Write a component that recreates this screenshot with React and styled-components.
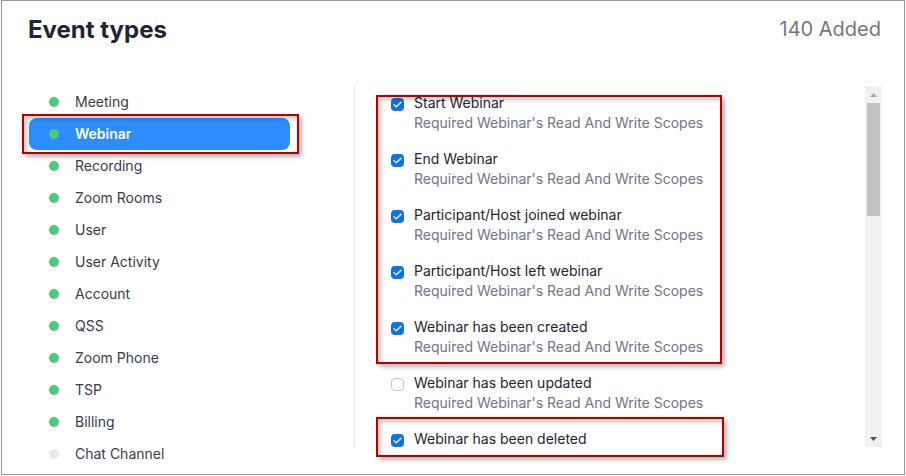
import React from 'react';
import styled, { createGlobalStyle } from 'styled-components';

const Global = createGlobalStyle`
    body {
        margin: 0;
        font-family: Inter, "Noto Sans", sans-serif;
        background: #fff;
    }
`

const Frame = styled.div`
    position: relative;
    box-sizing: border-box;
    width: 904px;
    height: 475px;
    margin-left: 1px;
    border: 1px solid #999;
    background: #fff;
    overflow: hidden;
`

const Header = styled.div`
    display: flex;
    justify-content: space-between;
    align-items: flex-start;
    height: 85px;
    box-sizing: border-box;
    padding: 13px 23px 0 26px;
`

const Title = styled.h1`
    margin: 0;
    font-size: 24px;
    line-height: 32px;
    font-weight: 700;
    color: #232333;
`

const Count = styled.div`
    margin-top: 3px;
    font-size: 20px;
    line-height: 24px;
    color: #747487;
`

const Body = styled.div`
    display: flex;
    align-items: flex-start;
`

const Nav = styled.div`
    width: 352px;
    box-sizing: border-box;
    padding: 0 64px 0 27px;
`

const NavItem = styled.div`
    display: flex;
    align-items: center;
    height: 32px;
    padding-left: 20px;
    border-radius: 8px;
    font-size: 14px;
    line-height: 30px;
    color: ${({active}) => active ? '#fff' : '#39394d'};
    font-weight: ${({active}) => active ? 600 : 400};
    background: ${({active}) => active ? '#2d8cff' : 'transparent'};
`

const Dot = styled.span`
    width: 10px;
    height: 10px;
    border-radius: 50%;
    margin-right: 16px;
    background: ${({off}) => off ? '#e9e9f0' : '#4ccc78'};
`

const Panel = styled.div`
    display: flex;
    flex: 1;
    height: 361px;
    border-left: 1px solid #e4e4ef;
`

const List = styled.div`
    flex: 1;
    overflow: hidden;
    padding: 7px 0 0 36px;
`

const Event = styled.div`
    display: flex;
    align-items: flex-start;
    margin-bottom: 16px;
`

const Box = styled.span`
    flex: none;
    box-sizing: border-box;
    width: 13px;
    height: 13px;
    margin: 5px 10px 0 0;
    border-radius: 4px;
    display: flex;
    align-items: center;
    justify-content: center;
    background: ${({checked}) => checked ? '#0e72ed' : '#fff'};
    border: ${({checked}) => checked ? 'none' : '1px solid #c6c6d8'};
`

const Texts = styled.div`
    font-size: 14px;
    line-height: 20px;
`

const Name = styled.div`
    color: #232333;
`

const Scope = styled.div`
    color: #747487;
`

const Scrollbar = styled.div`
    display: flex;
    flex-direction: column;
    align-items: center;
    width: 17px;
    margin-right: 22px;
    background: #f1f1f1;
`

const Arrow = styled.div`
    height: 17px;
    width: 100%;
    display: flex;
    align-items: center;
    justify-content: center;
`

const Thumb = styled.div`
    width: 13px;
    height: 113px;
    background: #c1c1c1;
`

const Spacer = styled.div`
    flex: 1;
`

const Mark = styled.div`
    position: absolute;
    box-sizing: border-box;
    border: 2px solid #b40000;
    box-shadow: 3px 3px 4px rgba(0,0,0,0.28), inset 3px 3px 4px rgba(0,0,0,0.22);
    pointer-events: none;
`

const navItems = [
    {label: 'Meeting'},
    {label: 'Webinar', active: true},
    {label: 'Recording'},
    {label: 'Zoom Rooms'},
    {label: 'User'},
    {label: 'User Activity'},
    {label: 'Account'},
    {label: 'QSS'},
    {label: 'Zoom Phone'},
    {label: 'TSP'},
    {label: 'Billing'},
    {label: 'Chat Channel', off: true},
];

// the last one is scrolled half out of view, so it shows no scope line
const events = [
    {name: 'Start Webinar', checked: true, scope: true},
    {name: 'End Webinar', checked: true, scope: true},
    {name: 'Participant/Host joined webinar', checked: true, scope: true},
    {name: 'Participant/Host left webinar', checked: true, scope: true},
    {name: 'Webinar has been created', checked: true, scope: true},
    {name: 'Webinar has been updated', checked: false, scope: true},
    {name: 'Webinar has been deleted', checked: true},
];

const SCOPE = "Required Webinar's Read And Write Scopes";

function Check(){
    return <svg width="9" height="7" viewBox="0 0 9 7">
        <path d="M1 3.6 L3.3 5.8 L8 1.2" fill="none" stroke="#fff" strokeWidth="1.3" strokeLinecap="round" strokeLinejoin="round" />
    </svg>
}

function Triangle({up, color}){
    return <svg width="7" height="4" viewBox="0 0 7 4">
        <path d={up ? 'M0 4 L3.5 0 L7 4 Z' : 'M0 0 L3.5 4 L7 0 Z'} fill={color} />
    </svg>
}

export default function App(){
    return <>
        <Global />
        <Frame>
            <Header>
                <Title>Event types</Title>
                <Count>140 Added</Count>
            </Header>
            <Body>
                <Nav>
                    {navItems.map(item =>
                        <NavItem key={item.label} active={item.active}>
                            <Dot off={item.off} />
                            {item.label}
                        </NavItem>
                    )}
                </Nav>
                <Panel>
                    <List>
                        {events.map(ev =>
                            <Event key={ev.name}>
                                <Box checked={ev.checked}>{ev.checked && <Check />}</Box>
                                <Texts>
                                    <Name>{ev.name}</Name>
                                    {ev.scope && <Scope>{SCOPE}</Scope>}
                                </Texts>
                            </Event>
                        )}
                    </List>
                    <Scrollbar>
                        <Arrow><Triangle up color="#a8a8a8" /></Arrow>
                        <Thumb />
                        <Spacer />
                        <Arrow><Triangle color="#505050" /></Arrow>
                    </Scrollbar>
                </Panel>
            </Body>
            <Mark style={{left: 20, top: 113, width: 277, height: 40}} />
            <Mark style={{left: 374, top: 94, width: 346, height: 269}} />
            <Mark style={{left: 374, top: 416, width: 348, height: 40}} />
        </Frame>
    </>
}
